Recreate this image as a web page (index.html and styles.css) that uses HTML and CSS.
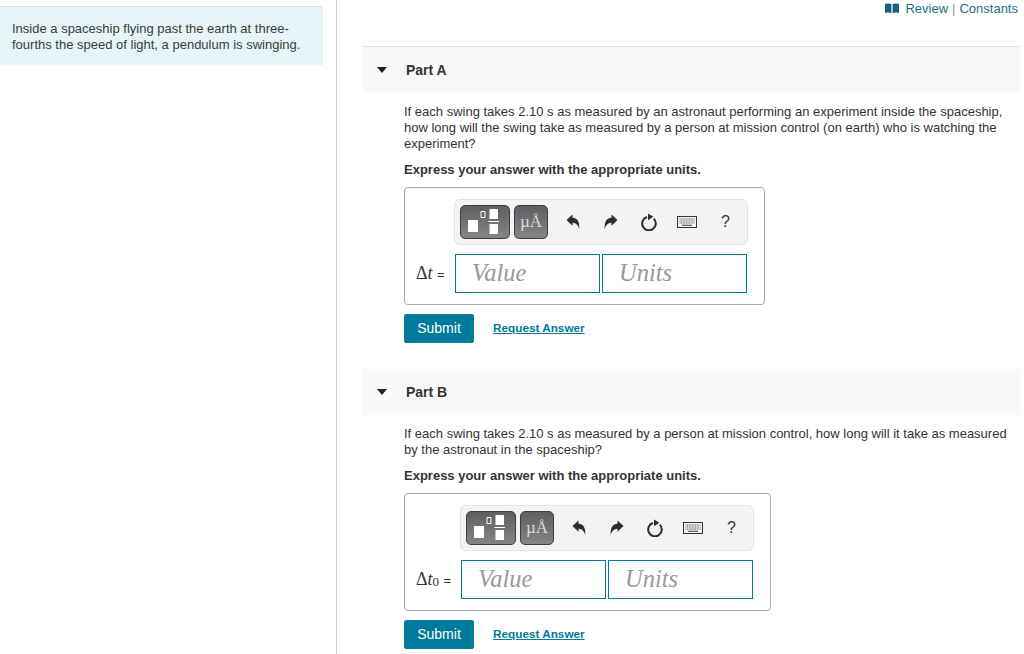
FILE: index.html
```html
<!DOCTYPE html>
<html>
<head>
<meta charset="utf-8">
<title>Pendulum in a spaceship</title>
<link rel="stylesheet" href="styles.css">
</head>
<body>
<svg class="defs" width="0" height="0">
  <symbol id="tpl" viewBox="0 0 40 32"><path d="M3 14h10v12H3zM24.500 3H33v10h-8.500zM24.500 18H33v10h-8.500z" fill="#fff"/><path d="M16 5.500h4v6h-4z" fill="none" stroke="#fff"/><path d="M23.500 15.500H34" stroke="#fff"/></symbol>
  <symbol id="undo" viewBox="0 0 16 16"><path d="M1.500 6 7.500.5v3.300c4.500.2 7.300 3.300 6.800 11.700-.8-4-2.800-6.700-6.800-6.800v3z"/></symbol>
  <symbol id="redo" viewBox="0 0 16 16"><path d="M14.500 6 8.500.5v3.300C4 4 1.200 7.100 1.700 15.500c.8-4 2.800-6.700 6.800-6.800v3z"/></symbol>
  <symbol id="reset" viewBox="0 0 18 18"><path d="M7 4A6.800 6.800 0 1 0 13.800 5.700" fill="none" stroke="#2d2d2d" stroke-width="2"/><path d="M8 .6 13.400 3.800 8 7.200z" fill="#2d2d2d"/></symbol>
  <symbol id="keys" viewBox="0 0 20 12"><rect x=".5" y=".5" width="19" height="11" fill="#f4f4f4" stroke="#333"/><path d="M2.500 3h15M2.500 5h15M2.500 7h15" stroke="#555" stroke-dasharray="1 .6"/><path d="M5 9.300h10" stroke="#555" stroke-width="1.200"/></symbol>
</svg>
<div class="page">
  <aside class="sidebar">
    <div class="intro">Inside a spaceship flying past the earth at three-fourths the speed of light, a pendulum is swinging.</div>
  </aside>
  <main class="content">
    <div class="toplinks">
      <svg class="book" width="14" height="10" viewBox="0 0 14 10"><path d="M0 1q3.200-1.200 6.400 0v9Q3.200 8.800 0 10zM7.600 1q3.200-1.200 6.400 0v9q-3.200-1.200-6.400 0z"/></svg>
      <a href="#">Review</a><span class="sep">|</span><a href="#">Constants</a>
    </div>

    <section class="part part-a">
      <h2 class="part-head"><span class="caret"></span>Part A</h2>
      <div class="part-body">
        <p class="question">If each swing takes 2.10 s as measured by an astronaut performing an experiment inside the spaceship, how long will the swing take as measured by a person at mission control (on earth) who is watching the experiment?</p>
        <p class="express">Express your answer with the appropriate units.</p>
        <div class="answer-box">
          <div class="toolbar">
            <span class="tpl-btn tpl-wide"><svg width="40" height="32"><use href="#tpl"/></svg></span>
            <span class="tpl-btn tpl-mu">µÅ</span>
            <svg class="tool tool-undo" width="16" height="16"><use href="#undo"/></svg>
            <svg class="tool tool-redo" width="16" height="16"><use href="#redo"/></svg>
            <svg class="tool tool-reset" width="18" height="18"><use href="#reset"/></svg>
            <svg class="tool tool-keys" width="20" height="12"><use href="#keys"/></svg>
            <span class="tool-help">?</span>
          </div>
          <div class="entry">
            <span class="label">Δ<i>t</i> <span class="eq">=</span></span>
            <span class="field">Value</span>
            <span class="field">Units</span>
          </div>
        </div>
        <div class="actions">
          <button class="submit">Submit</button>
          <a class="request" href="#">Request Answer</a>
        </div>
      </div>
    </section>

    <section class="part part-b">
      <h2 class="part-head"><span class="caret"></span>Part B</h2>
      <div class="part-body">
        <p class="question">If each swing takes 2.10 s as measured by a person at mission control, how long will it take as measured by the astronaut in the spaceship?</p>
        <p class="express">Express your answer with the appropriate units.</p>
        <div class="answer-box">
          <div class="toolbar">
            <span class="tpl-btn tpl-wide"><svg width="40" height="32"><use href="#tpl"/></svg></span>
            <span class="tpl-btn tpl-mu">µÅ</span>
            <svg class="tool tool-undo" width="16" height="16"><use href="#undo"/></svg>
            <svg class="tool tool-redo" width="16" height="16"><use href="#redo"/></svg>
            <svg class="tool tool-reset" width="18" height="18"><use href="#reset"/></svg>
            <svg class="tool tool-keys" width="20" height="12"><use href="#keys"/></svg>
            <span class="tool-help">?</span>
          </div>
          <div class="entry">
            <span class="label">Δ<i>t</i><sub>0</sub> <span class="eq">=</span></span>
            <span class="field">Value</span>
            <span class="field">Units</span>
          </div>
        </div>
        <div class="actions">
          <button class="submit">Submit</button>
          <a class="request" href="#">Request Answer</a>
        </div>
      </div>
    </section>
  </main>
</div>
</body>
</html>
```

FILE: styles.css
```css
html, body {
    margin: 0;
    height: 654px;
    overflow: hidden;
    background: #fff;
    font-family: "Liberation Sans", Arial, sans-serif;
    font-size: 13px;
    color: #333;
}
.defs {
    display: block;
    height: 0;
}
.page {
    display: flex;
    height: 654px;
}

/* left column */
.sidebar {
    box-sizing: border-box;
    width: 337px;
    padding-top: 6px;
    padding-right: 13px;
    border-right: 1px solid #c5d5e8;
    flex: none;
}
.intro {
    box-sizing: border-box;
    height: 59px;
    padding: 14px 12px 0;
    border-top: 1px solid #dde3e8;
    background: #e5f5f7;
    line-height: 16px;
    color: #3c3c3c;
}

/* right column */
.content {
    flex: 1;
    padding-left: 26px;
    padding-right: 4px;
    min-width: 0;
}
.toplinks {
    display: flex;
    align-items: center;
    justify-content: flex-end;
    height: 16px;
    padding-right: 2px;
    color: #999;
}
.toplinks a {
    color: #1e6f86;
    text-decoration: none;
}
.book {
    fill: #17607c;
    margin-right: 6px;
}
.sep {
    margin: 0 4px;
}
.part-a {
    margin-top: 30px;
}
.part-b {
    margin-top: 26px;
}
.part-head {
    box-sizing: border-box;
    display: flex;
    align-items: center;
    height: 46px;
    margin: 0;
    padding-left: 14px;
    background: #f9f9f9;
    font-size: 14px;
    font-weight: bold;
    color: #333;
}
.part-a .part-head {
    padding-top: 1px;
    border-top: 1px solid #ddd;
}
.caret {
    width: 0;
    height: 0;
    margin-right: 19px;
    border-left: 5.500px solid transparent;
    border-right: 5.500px solid transparent;
    border-top: 6px solid #222;
}
.part-body {
    padding-left: 41px;
}
.question {
    margin: 0;
    padding-top: 12px;
    line-height: 16px;
}
.part-b .question {
    padding-top: 11px;
}
.express {
    margin: 10px 0 0;
    line-height: 16px;
    font-weight: bold;
}

/* answer box */
.answer-box {
    box-sizing: border-box;
    display: inline-block;
    vertical-align: top;
    height: 118px;
    margin-top: 9px;
    padding: 11px 16px 0 11px;
    border: 1px solid #aaa;
    border-radius: 4px;
}
.toolbar {
    box-sizing: border-box;
    display: flex;
    align-items: center;
    width: 294px;
    height: 46px;
    margin-left: 38px;
    padding-left: 5px;
    background: #f3f3f3;
    border: 1px solid #e4e4e4;
    border-radius: 6px;
}
.part-b .toolbar {
    margin-left: 44px;
}
.tpl-btn {
    box-sizing: border-box;
    display: flex;
    align-items: center;
    justify-content: center;
    height: 34px;
    background: linear-gradient(#5e5e60, #858587);
    border: 1px solid #3f3f3f;
    border-radius: 5px;
    color: #fff;
}
.tpl-wide {
    width: 50px;
    margin-right: 4px;
}
.tpl-mu {
    width: 34px;
    font-family: "Liberation Serif", serif;
    font-size: 17px;
    color: #d8d8d8;
}
.tool {
    fill: #2d2d2d;
    flex: none;
}
.tool-undo {
    margin-left: 17px;
}
.tool-redo {
    margin-left: 22px;
}
.tool-reset {
    margin-left: 21px;
}
.tool-keys {
    margin-left: 19px;
}
.tool-help {
    margin-left: 24px;
    font-size: 16px;
    color: #333;
}
.entry {
    display: flex;
    align-items: center;
    height: 39px;
    margin-top: 9px;
}
.label {
    flex: 0 0 39px;
    font-family: "Liberation Serif", serif;
    font-size: 18px;
    white-space: nowrap;
}
.part-b .label {
    flex-basis: 45px;
}
.label sub {
    font-size: 13px;
    line-height: 0;
    vertical-align: -1px;
}
.eq {
    font-family: "Liberation Sans", Arial, sans-serif;
    font-size: 13px;
}
.field {
    box-sizing: border-box;
    width: 145px;
    height: 39px;
    padding-left: 16px;
    border: 1px solid #007a9c;
    font-family: "Liberation Serif", serif;
    font-style: italic;
    font-size: 24.500px;
    line-height: 36px;
    color: #999;
}
.field + .field {
    margin-left: 2px;
}

.actions {
    display: flex;
    align-items: center;
    margin-top: 9px;
}
.submit {
    box-sizing: border-box;
    width: 70px;
    height: 29px;
    padding: 0 0 2px;
    border: 1px solid #0b7fa2;
    border-radius: 2px;
    background: #007a9c;
    color: #fff;
    font-family: "Liberation Sans", Arial, sans-serif;
    font-size: 14px;
}
.request {
    margin-left: 19px;
    margin-bottom: 2px;
    font-size: 11.750px;
    font-weight: bold;
    color: #007a9c;
}
```
